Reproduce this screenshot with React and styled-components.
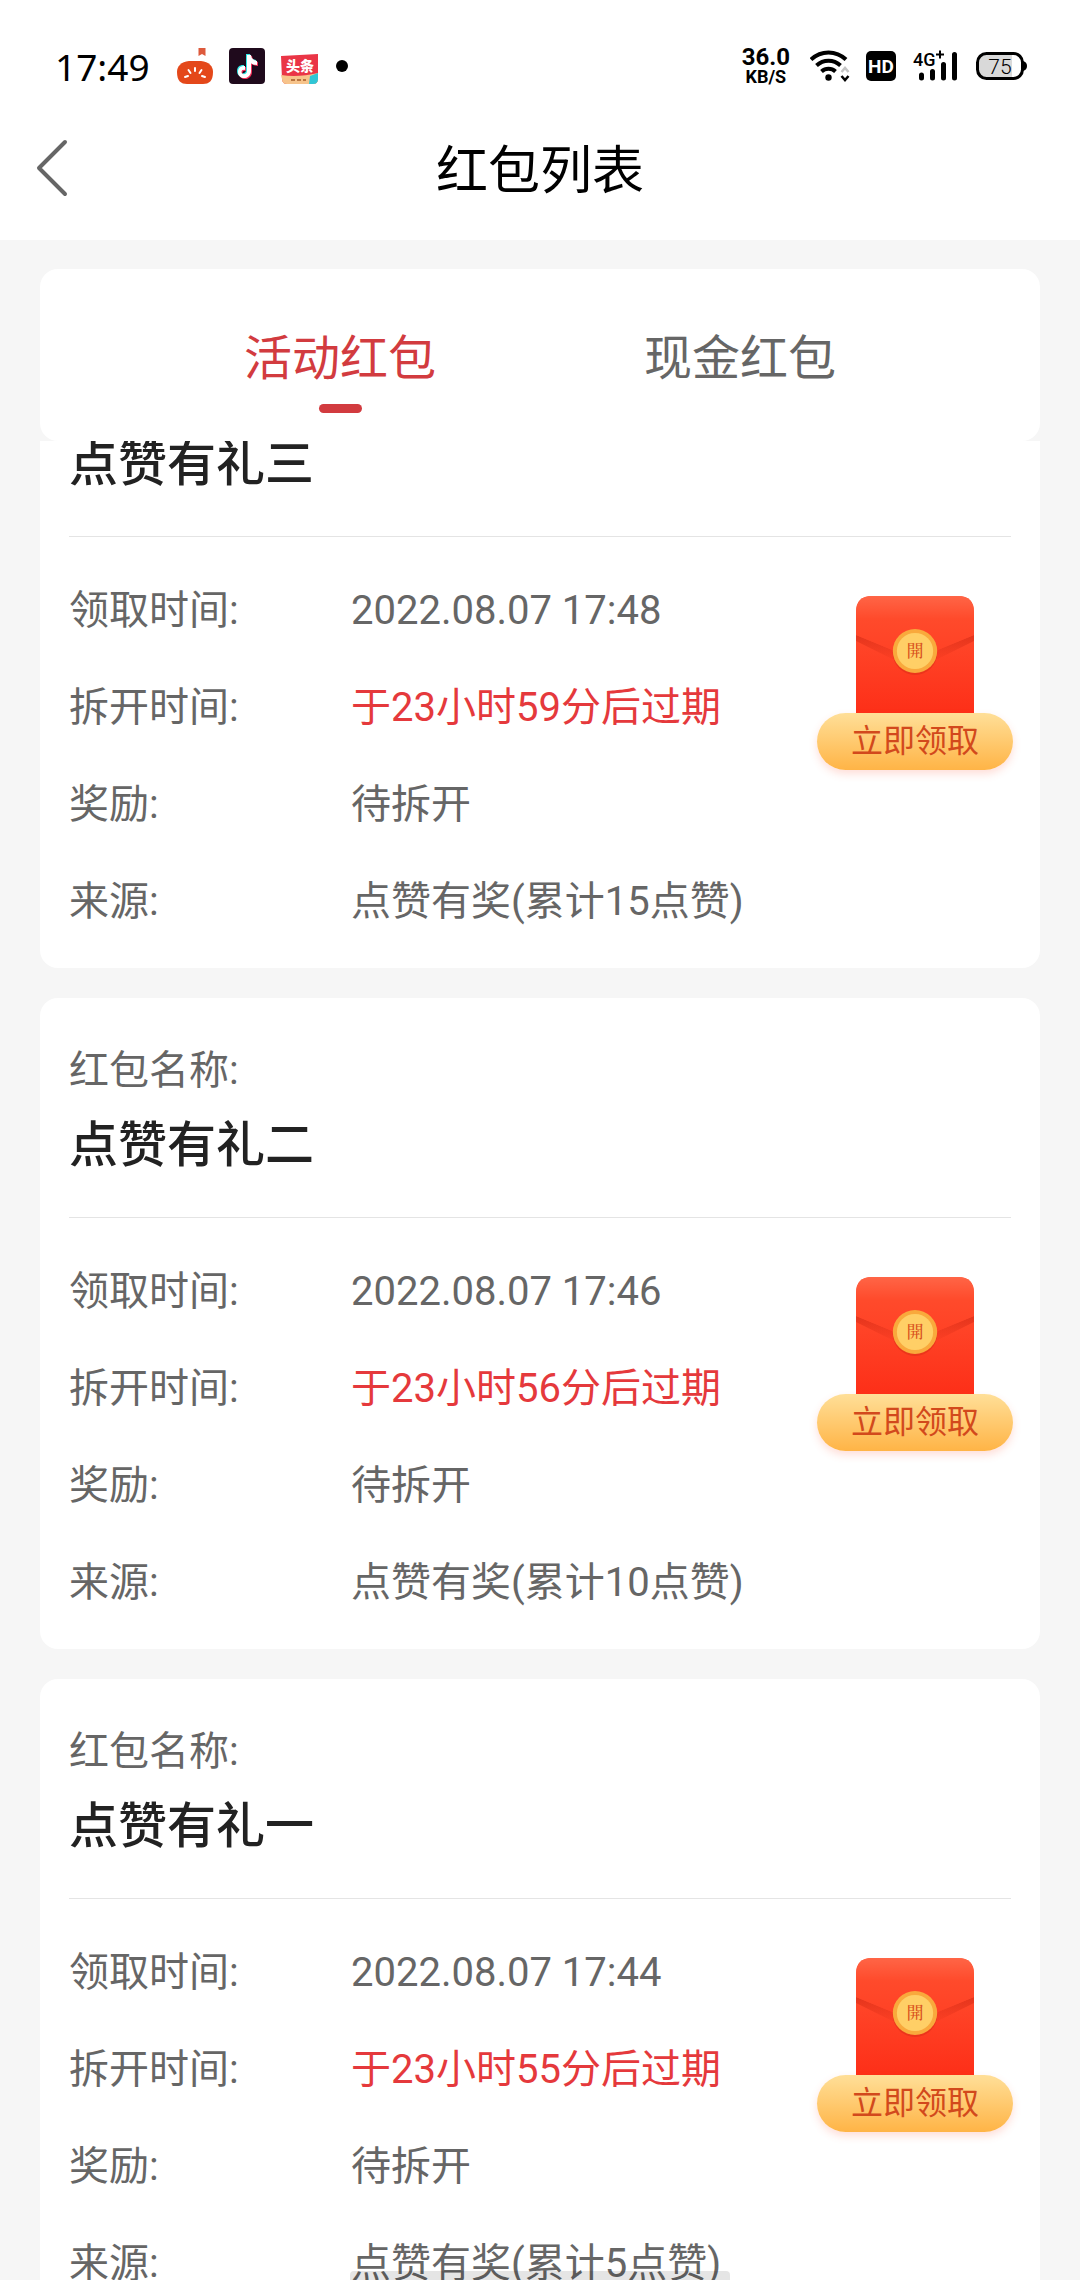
import { useLayoutEffect, useRef, useState } from "react"
import styled, { createGlobalStyle } from "styled-components"

const GlobalStyle = createGlobalStyle`
    *{
        box-sizing: border-box;
    }
    body{
        margin: 0;
        background-color: #f6f6f6;
        font-family: Roboto, "Noto Sans CJK SC", sans-serif;
        color: #666666;
    }
    button{
        border: none;
        padding: 0;
        background: none;
        font-family: inherit;
        cursor: pointer;
    }
    h1, h2, p, ul, dl, dd{
        margin: 0;
        padding: 0;
    }
    svg{
        display: block;
        flex: none;
    }
`

const Page = styled.div`
    height: 100vh;
    display: flex;
    flex-direction: column;
    overflow: hidden;
`

const StatusBar = styled.div`
    height: 100px;
    padding: 32px 53px 0 55px;
    display: flex;
    align-items: center;
    justify-content: space-between;
    background-color: #ffffff;
    color: #000000;
`

const StatusGroup = styled.div`
    display: flex;
    align-items: center;
    gap: 16px;
`

const Clock = styled.span`
    width: 106px;
    padding-top: 2px;
    font-family: "Noto Sans", sans-serif;
    font-size: 37px;
    line-height: 40px;
`

const Speed = styled.span`
    padding-right: 4px;
    display: flex;
    flex-direction: column;
    align-items: center;
    font-size: 24px;
    font-weight: 700;
    line-height: 22px;
    small{
        font-size: 18px;
        line-height: 18px;
    }
`

const NavBar = styled.header`
    height: 140px;
    padding: 0 34px;
    display: grid;
    grid-template-columns: 1fr auto 1fr;
    align-items: center;
    background-color: #ffffff;
    h1{
        padding-top: 4px;
        color: #000000;
        font-size: 52px;
        font-weight: 400;
        line-height: 72px;
    }
`

const BackButton = styled.button`
    justify-self: start;
    padding-bottom: 4px;
`

const Tabs = styled.div`
    margin: 29px 40px 0;
    padding: 54px 100px 28px;
    display: flex;
    border-radius: 18px;
    background-color: #ffffff;
`

const Tab = styled.button`
    flex: 1;
    display: flex;
    flex-direction: column;
    align-items: center;
    gap: 9px;
    color: ${(props) => (props.$active ? "#d23b3f" : "#666666")};
    font-size: 48px;
    line-height: 72px;
    &::after{
        content: "";
        width: 43px;
        height: 9px;
        border-radius: 5px;
        background-color: ${(props) => (props.$active ? "#d23b3f" : "transparent")};
    }
`

const List = styled.ul`
    flex: 1;
    min-height: 0;
    padding: 0 40px 60px;
    overflow-y: auto;
    scrollbar-width: none;
    list-style: none;
`

const Card = styled.li`
    border-radius: 18px;
    background-color: #ffffff;
    & + &{
        margin-top: 30px;
    }
`

const CardHead = styled.div`
    margin: 0 29px;
    padding: 41px 0 28px;
    border-bottom: 1px solid #e4e4e4;
    p{
        font-size: 40px;
        line-height: 64px;
    }
    h2{
        color: #222222;
        font-size: 49px;
        font-weight: 500;
        line-height: 86px;
    }
`

const CardBody = styled.div`
    padding: 25px 27px 18px 29px;
    display: flex;
    align-items: flex-start;
    justify-content: space-between;
`

const Details = styled.dl`
    font-size: 40px;
    line-height: 97px;
`

const Row = styled.div`
    display: flex;
    dt{
        width: 282px;
    }
    dd{
        white-space: nowrap;
        color: ${(props) => (props.$alert ? "#e5393c" : "inherit")};
    }
`

const ClaimButton = styled.button`
    margin-top: 34px;
    display: flex;
    flex-direction: column;
    align-items: center;
`

const ClaimLabel = styled.span`
    width: 196px;
    height: 57px;
    border-radius: 29px;
    background: linear-gradient(#ffdf98, #ffb446);
    box-shadow: 0 4px 8px rgba(255, 90, 60, 0.2);
    color: #d2491c;
    font-size: 32px;
    line-height: 57px;
`

const HomeBar = styled.div`
    position: fixed;
    bottom: 0;
    left: 50%;
    width: 380px;
    height: 9px;
    margin-left: -190px;
    border-radius: 4px 4px 0 0;
    background-color: rgba(0, 0, 0, 0.1);
`

const TomatoIcon = () => (
    <svg width="36" height="36" viewBox="0 0 36 36">
        <path d="M21.500 0h7v8l-3.500-2-3.500 2z" fill="#dd5a3c" />
        <path d="M12 13h12c8 1 12 5 12 11 0 9-4 12-10 12H10C4 36 0 33 0 24c0-6 4-10 12-11z" fill="#e4481a" />
        <g stroke="#ffffff" strokeWidth="2" strokeLinecap="round">
            <path d="M18 20v3M11.500 22l2 3M24.500 22l-2 3M8 29l3-1M28 29l-3-1" />
        </g>
    </svg>
)

const note = "M18 7h4c.3 3.500 2.500 5.500 6 6v4c-2.300 0-4.300-.7-6-1.800V23c0 9-13 9.500-13 1 0-4.500 3.500-6.500 7-6v4c-2-.5-3.500.4-3.500 2 0 3.200 5.500 3 5.500-1z"

const DouyinIcon = () => (
    <svg width="36" height="36" viewBox="0 0 36 36">
        <rect width="36" height="36" rx="4" fill="#1f0a1c" />
        <path d={note} fill="#2fe6e3" transform="translate(-1 -1)" />
        <path d={note} fill="#f5305a" transform="translate(1 1)" />
        <path d={note} fill="#ffffff" />
    </svg>
)

const ToutiaoIcon = () => (
    <svg width="37" height="36" viewBox="0 0 37 36">
        <path d="M0 8l37-2v25q0 5-5 5H6q-5 0-5-5z" fill="#ea3546" />
        <path d="M0 27c12 2 24 1 37-2v6q0 5-5 5H6q-5 0-5-5z" fill="#f7c48b" />
        <path d="M29 28l8-3v6q0 5-5 5h-4z" fill="#2fc6d6" />
        <g stroke="#b9763f" strokeWidth="2">
            <path d="M10 32h4M16 32h4M22 32h3" />
        </g>
        <text x="19" y="23" textAnchor="middle" fontSize="14" fontWeight="900" fill="#ffffff">头条</text>
    </svg>
)

const WifiIcon = () => (
    <svg width="40" height="32" viewBox="0 0 40 32" fill="none">
        <g stroke="#000000" strokeWidth="4">
            <path d="M1 9.500C11 0 26 0 36 9.500" />
            <path d="M6.500 15.500c7-6.500 17-6.500 24 0" />
            <path d="M11.500 21.500c4-3.700 10-3.700 14 0" />
        </g>
        <circle cx="18.500" cy="27.500" r="3.200" fill="#000000" />
        <path d="M31.500 22l3.500-4 3.500 4" stroke="#c4c4c4" strokeWidth="2.500" />
        <path d="M31.500 26l3.500 4 3.500-4" stroke="#000000" strokeWidth="2.500" />
    </svg>
)

const HdIcon = () => (
    <svg width="30" height="30" viewBox="0 0 30 30">
        <rect width="30" height="30" rx="5" fill="#000000" />
        <text x="15" y="22" textAnchor="middle" fontSize="19" fontWeight="700" fill="#ffffff">HD</text>
    </svg>
)

const SignalIcon = () => (
    <svg width="48" height="32" viewBox="-1 0 48 32">
        <text x="0" y="16" fontSize="18" fontWeight="500" fill="#000000">4G</text>
        <path d="M23 4.500h8M27 .5v8" stroke="#000000" strokeWidth="2" />
        <g stroke="#000000" strokeWidth="5" strokeLinecap="round">
            <path d="M8.500 25v3M19.500 21.500v6.500M30.500 14.500V28M41.500 4.500V28" />
        </g>
    </svg>
)

const BatteryIcon = () => (
    <svg width="51" height="30" viewBox="0 0 51 30">
        <path d="M10 3h26v24H10q-8 0-8-8v-8q0-8 8-8z" fill="#d9d9d9" />
        <rect x="1.500" y="2.500" width="45" height="25" rx="9" fill="none" stroke="#000000" strokeWidth="3" />
        <path d="M47 10q4 1 4 5t-4 5z" fill="#000000" />
        <text x="24" y="23" textAnchor="middle" fontSize="21" fontWeight="300" fill="#000000">75</text>
    </svg>
)

const EnvelopeIcon = () => (
    <svg width="118" height="117" viewBox="0 0 117 117" preserveAspectRatio="none">
        <defs>
            <linearGradient id="body" x1="0" y1="0" x2="0" y2="1">
                <stop offset="0" stopColor="#ff5c3c" />
                <stop offset="0.4" stopColor="#ff4528" />
                <stop offset="1" stopColor="#fd2f18" />
            </linearGradient>
            <linearGradient id="flap" x1="0" y1="0" x2="0" y2="1">
                <stop offset="0" stopColor="#ff6546" />
                <stop offset="0.4" stopColor="#ff4a2b" />
                <stop offset="1" stopColor="#ff4125" />
            </linearGradient>
            <linearGradient id="fold" x1="0" y1="0" x2="0" y2="1">
                <stop offset="0" stopColor="#d92c16" />
                <stop offset="1" stopColor="#d92c16" stopOpacity="0" />
            </linearGradient>
        </defs>
        <path d="M0 117V16Q0 0 16 0h85q16 0 16 16v101z" fill="url(#body)" />
        <path d="M0 39l36 15q22 8 45 0l36-15v6L81 63q-23 8-45 0L0 45z" fill="url(#fold)" opacity="0.7" />
        <path d="M0 39V16Q0 0 16 0h85q16 0 16 16v23L81 54q-23 8-45 0z" fill="url(#flap)" />
        <circle cx="58.500" cy="57" r="22" fill="#d92c16" opacity="0.5" />
        <circle cx="58.500" cy="55" r="22" fill="#f9a93c" />
        <circle cx="58.500" cy="55" r="18" fill="#ffcf66" />
        <text
            x="58.500"
            y="61"
            textAnchor="middle"
            fontFamily="'Noto Serif CJK TC', 'Noto Sans CJK TC', serif"
            fontSize="17"
            fontWeight="500"
            fill="#d9541e"
        >
            開
        </text>
    </svg>
)

const packets = [
    { name: "点赞有礼三", received: "2022.08.07 17:48", expires: "于23小时59分后过期", source: "点赞有奖(累计15点赞)" },
    { name: "点赞有礼二", received: "2022.08.07 17:46", expires: "于23小时56分后过期", source: "点赞有奖(累计10点赞)" },
    { name: "点赞有礼一", received: "2022.08.07 17:44", expires: "于23小时55分后过期", source: "点赞有奖(累计5点赞)" },
]

const PacketCard = ({ packet }) => {
    return (
        <Card>
            <CardHead>
                <p>红包名称:</p>
                <h2>{packet.name}</h2>
            </CardHead>
            <CardBody>
                <Details>
                    <Row>
                        <dt>领取时间:</dt>
                        <dd>{packet.received}</dd>
                    </Row>
                    <Row $alert>
                        <dt>拆开时间:</dt>
                        <dd>{packet.expires}</dd>
                    </Row>
                    <Row>
                        <dt>奖励:</dt>
                        <dd>待拆开</dd>
                    </Row>
                    <Row>
                        <dt>来源:</dt>
                        <dd>{packet.source}</dd>
                    </Row>
                </Details>
                <ClaimButton type="button">
                    <EnvelopeIcon />
                    <ClaimLabel>立即领取</ClaimLabel>
                </ClaimButton>
            </CardBody>
        </Card>
    )
}

const tabs = ["活动红包", "现金红包"]

export default function App() {
    const [activeTab, setActiveTab] = useState(0)
    const listRef = useRef(null)

    // the list opens a little way down
    useLayoutEffect(() => {
        listRef.current.scrollTop = 124
    }, [])

    return (
        <>
            <GlobalStyle />
            <Page>
                <StatusBar>
                    <StatusGroup>
                        <Clock>17:49</Clock>
                        <TomatoIcon />
                        <DouyinIcon />
                        <ToutiaoIcon />
                        <svg width="14" height="12">
                            <circle cx="8" cy="6" r="6" />
                        </svg>
                    </StatusGroup>
                    <StatusGroup>
                        <Speed>
                            36.0
                            <small>KB/S</small>
                        </Speed>
                        <WifiIcon />
                        <HdIcon />
                        <SignalIcon />
                        <BatteryIcon />
                    </StatusGroup>
                </StatusBar>
                <NavBar>
                    <BackButton type="button" aria-label="返回">
                        <svg width="36" height="60" viewBox="0 0 36 60" fill="none">
                            <path d="M31 4L5 30l26 26" stroke="#666666" strokeWidth="4" strokeLinecap="round" strokeLinejoin="round" />
                        </svg>
                    </BackButton>
                    <h1>红包列表</h1>
                </NavBar>
                <Tabs role="tablist">
                    {tabs.map((label, index) => (
                        <Tab
                            key={label}
                            type="button"
                            role="tab"
                            aria-selected={index === activeTab}
                            $active={index === activeTab}
                            onClick={() => setActiveTab(index)}
                        >
                            {label}
                        </Tab>
                    ))}
                </Tabs>
                <List ref={listRef}>
                    {packets.map((packet) => (
                        <PacketCard key={packet.name} packet={packet} />
                    ))}
                </List>
            </Page>
            <HomeBar />
        </>
    )
}
